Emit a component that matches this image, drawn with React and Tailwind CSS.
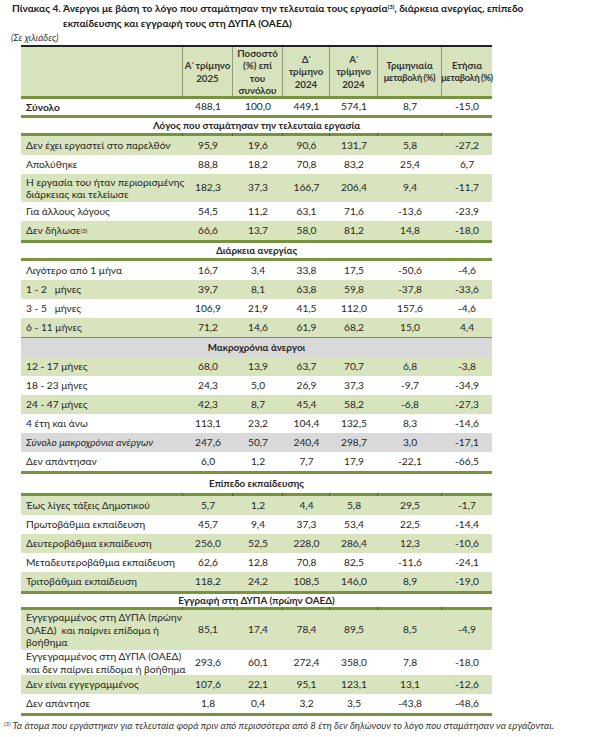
import React from "react";

const GRID = "grid grid-cols-[162px_50px_50px_47px_48px_64px_50px]";

const data = [
  { t: "line", h: "h-[3px]" },
  { t: "row", label: "Σύνολο", v: ["488,1", "100,0", "449,1", "574,1", "8,7", "-15,0"], h: "h-[16px]", bold: true },
  { t: "line", h: "h-[3px]" },
  { t: "sec", label: "Λόγος που σταμάτησαν την τελευταία εργασία", h: "h-[15px]" },
  { t: "tick" },
  { t: "row", label: "Δεν έχει εργαστεί στο παρελθόν", v: ["95,9", "19,6", "90,6", "131,7", "5,8", "-27,2"], bg: "g" },
  { t: "row", label: "Απολύθηκε", v: ["88,8", "18,2", "70,8", "83,2", "25,4", "6,7"] },
  { t: "row", label: ["Η εργασία του ήταν περιορισμένης", "διάρκειας και τελείωσε"], v: ["182,3", "37,3", "166,7", "206,4", "9,4", "-11,7"], bg: "g", h: "h-[28px]" },
  { t: "row", label: "Για άλλους λόγους", v: ["54,5", "11,2", "63,1", "71,6", "-13,6", "-23,9"] },
  { t: "row", label: "Δεν δήλωσε", sup: "(3)", v: ["66,6", "13,7", "58,0", "81,2", "14,8", "-18,0"], bg: "g" },
  { t: "line", h: "h-[3px]" },
  { t: "sec", label: "Διάρκεια ανεργίας", h: "h-[15px]" },
  { t: "line", h: "h-[3px]" },
  { t: "row", label: "Λιγότερο από 1 μήνα", v: ["16,7", "3,4", "33,8", "17,5", "-50,6", "-4,6"] },
  { t: "row", label: "1 - 2   μήνες", v: ["39,7", "8,1", "63,8", "59,8", "-37,8", "-33,6"], bg: "g" },
  { t: "row", label: "3 - 5   μήνες", v: ["106,9", "21,9", "41,5", "112,0", "157,6", "-4,6"] },
  { t: "row", label: "6 - 11 μήνες", v: ["71,2", "14,6", "61,9", "68,2", "15,0", "4,4"], bg: "g" },
  { t: "line", h: "h-[1px]" },
  { t: "sec", label: "Μακροχρόνια άνεργοι", h: "h-[19px]", bg: "gray" },
  { t: "row", label: "12 - 17 μήνες", v: ["68,0", "13,9", "63,7", "70,7", "6,8", "-3,8"], bg: "g" },
  { t: "row", label: "18 - 23 μήνες", v: ["24,3", "5,0", "26,9", "37,3", "-9,7", "-34,9"] },
  { t: "row", label: "24 - 47 μήνες", v: ["42,3", "8,7", "45,4", "58,2", "-6,8", "-27,3"], bg: "g" },
  { t: "row", label: "4 έτη και άνω", v: ["113,1", "23,2", "104,4", "132,5", "8,3", "-14,6"] },
  { t: "row", label: "Σύνολο μακροχρόνια ανέργων", v: ["247,6", "50,7", "240,4", "298,7", "3,0", "-17,1"], bg: "gray", italic: true },
  { t: "row", label: "Δεν απάντησαν", v: ["6,0", "1,2", "7,7", "17,9", "-22,1", "-66,5"] },
  { t: "line", h: "h-[3px]" },
  { t: "sec", label: "Επίπεδο εκπαίδευσης", h: "h-[19px]" },
  { t: "tick" },
  { t: "row", label: "Έως λίγες τάξεις Δημοτικού", v: ["5,7", "1,2", "4,4", "5,8", "29,5", "-1,7"], bg: "g" },
  { t: "row", label: "Πρωτοβάθμια εκπαίδευση", v: ["45,7", "9,4", "37,3", "53,4", "22,5", "-14,4"] },
  { t: "row", label: "Δευτεροβάθμια εκπαίδευση", v: ["256,0", "52,5", "228,0", "286,4", "12,3", "-10,6"], bg: "g" },
  { t: "row", label: "Μεταδευτεροβάθμια εκπαίδευση", v: ["62,6", "12,8", "70,8", "82,5", "-11,6", "-24,1"] },
  { t: "row", label: "Τριτοβάθμια εκπαίδευση", v: ["118,2", "24,2", "108,5", "146,0", "8,9", "-19,0"], bg: "g" },
  { t: "line", h: "h-[3px]" },
  { t: "sec", label: "Εγγραφή στη ΔΥΠΑ (πρώην ΟΑΕΔ)", h: "h-[13px]" },
  { t: "tick" },
  { t: "row", label: ["Εγγεγραμμένος στη ΔΥΠΑ (πρώην", "ΟΑΕΔ)  και παίρνει επίδομα ή", "βοήθημα"], v: ["85,1", "17,4", "78,4", "89,5", "8,5", "-4,9"], bg: "g", h: "h-[40px]" },
  { t: "row", label: ["Εγγεγραμμένος στη ΔΥΠΑ (ΟΑΕΔ)", "και δεν παίρνει επίδομα ή βοήθημα"], v: ["293,6", "60,1", "272,4", "358,0", "7,8", "-18,0"], h: "h-[25px]" },
  { t: "row", label: "Δεν είναι εγγεγραμμένος", v: ["107,6", "22,1", "95,1", "123,1", "13,1", "-12,6"], bg: "g" },
  { t: "row", label: "Δεν απάντησε", v: ["1,8", "0,4", "3,2", "3,5", "-43,8", "-48,6"] },
  { t: "line", h: "h-[3px]" },
];

function Acc() {
  return <span className="-ml-[1px] -mr-[1px]">΄</span>;
}

const Tight = () => (
  <span className="text-[9.3px] tracking-[-0.3px] [word-spacing:-0.5px]">μεταβολή (%)</span>
);

const headers = [
  [<>Α<Acc /> τρίμηνο</>, "2025"],
  ["Ποσοστό", "(%) επί", "του", "συνόλου"],
  [<>Δ<Acc /></>, "τρίμηνο", "2024"],
  [<>Α<Acc /></>, "τρίμηνο", "2024"],
  ["Τριμηνιαία", <Tight />],
  ["Ετήσια", <Tight />],
];

function Row({ r }) {
  const bg = r.bg === "g" ? "bg-[#d8e4bd]" : r.bg === "gray" ? "bg-[#d9d9d9]" : "bg-white";
  const h = r.h || "h-[19px]";
  return (
    <div className={`${GRID} ${bg} ${h} items-center`}>
      <div className={`pl-[5px] leading-[12.5px] whitespace-nowrap ${r.bold ? "font-bold" : ""} ${r.italic ? "italic" : ""}`}>
        {Array.isArray(r.label)
          ? r.label.map((l, i) => <div key={i} className="whitespace-pre">{l}</div>)
          : <span className="whitespace-pre">{r.label}</span>}
        {r.sup && <sup className="text-[6px] relative -top-[1px]">{r.sup}</sup>}
      </div>
      {r.v.map((x, i) => (
        <div key={i} className="text-center">{x}</div>
      ))}
    </div>
  );
}

function Tick() {
  return (
    <div className={`${GRID} h-[3px] bg-[#77933c]`}>
      {[0, 1, 2, 3, 4, 5, 6].map((i) => (
        <div key={i} className={i < 6 ? "border-r border-[#4f6325]" : ""} />
      ))}
    </div>
  );
}

export default function App() {
  return (
    <div className="w-[591px] h-[737px] bg-white text-[#262626] overflow-hidden" style={{ fontFamily: "Lato, 'Noto Sans', sans-serif" }}>
      <div className="pl-[12px] pt-[1px] text-[10.2px] font-bold leading-[15px] text-[#1a1a1a] whitespace-nowrap">
        <div className="flex">
          <span className="w-[51px] shrink-0">Πίνακας 4.</span>
          <span>
            Άνεργοι με βάση το λόγο που σταμάτησαν την τελευταία τους εργασία<sup className="text-[6px]">(3)</sup>, διάρκεια ανεργίας, επίπεδο
          </span>
        </div>
        <div className="pl-[51px]">εκπαίδευσης και εγγραφή τους στη ΔΥΠΑ (ΟΑΕΔ)</div>
      </div>
      <div className="pl-[11px] text-[9.4px] italic leading-[12px] mt-[1px] text-[#333]">(Σε χιλιάδες)</div>
      <div className="ml-[21px] w-[471px] text-[10.2px] mt-[1px]">
        <div className="h-[2px] bg-[#222]" />
        <div className={`${GRID} h-[49px] bg-[#d7e3bd] font-bold text-[9.7px] leading-[12.3px] text-[#333]`}>
          <div className="border-r border-[#8f9c78]" />
          {headers.map((hd, i) => (
            <div key={i} className={`flex flex-col items-center justify-center whitespace-nowrap ${i < 5 ? "border-r border-[#8f9c78]" : ""}`}>
              {hd.map((l, j) => <div key={j}>{l}</div>)}
            </div>
          ))}
        </div>
        {data.map((r, i) => {
          if (r.t === "line") return <div key={i} className={`${r.h} bg-[#77933c]`} />;
          if (r.t === "tick") return <Tick key={i} />;
          if (r.t === "sec")
            return (
              <div key={i} className={`${r.h} ${r.bg === "gray" ? "bg-[#d9d9d9]" : "bg-white"} flex items-center justify-center font-bold text-[9.8px]`}>
                {r.label}
              </div>
            );
          return <Row key={i} r={r} />;
        })}
      </div>
      <div className="pl-[4px] mt-[3px] text-[9.7px] italic leading-[12px] whitespace-nowrap text-[#333]">
        <sup className="text-[6px]">(3)</sup> Τα άτομα που εργάστηκαν για τελευταία φορά πριν από περισσότερα από 8 έτη δεν δηλώνουν το λόγο που σταμάτησαν να εργάζονται.
      </div>
    </div>
  );
}
